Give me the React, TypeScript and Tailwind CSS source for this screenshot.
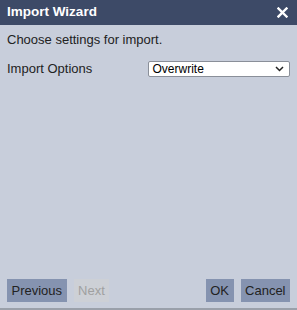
export default function App() {
  return (
    <div className="w-[297px] h-[310px] flex flex-col bg-[#c8cedb] border-b-2 border-[#9aa0aa] [font-family:'Liberation_Sans',Arial,sans-serif] text-[#222]">
      <div className="h-[25px] bg-[#3d4a67] flex items-center justify-between pl-[7px] pr-[9px] text-white">
        <span className="text-[13.5px] font-bold">Import Wizard</span>
        <svg width="11" height="11" viewBox="0 0 11 11">
          <path d="M1.5 1.5L9.5 9.5M9.5 1.5L1.5 9.5" stroke="white" strokeWidth="2.4" strokeLinecap="square" />
        </svg>
      </div>
      <div className="flex-1 flex flex-col px-[7px] pt-[7px]">
        <p className="text-[13px] leading-[16px]">Choose settings for import.</p>
        <div className="mt-[11px] flex items-center">
          <span className="w-[142px] text-[13px]">Import Options</span>
          <div className="w-[142px] h-[16px] bg-white border border-[#8a8f99] rounded-[2px] flex items-center justify-between pl-[3px] pr-[5px]">
            <span className="text-[12px] leading-none text-black">Overwrite</span>
            <svg width="9" height="6" viewBox="0 0 9 6">
              <path d="M1 1L4.5 4.5L8 1" stroke="#222" strokeWidth="1.5" fill="none" />
            </svg>
          </div>
        </div>
        <div className="mt-auto mb-[6px] flex items-center text-[13px]">
          <button className="h-[23px] px-[4.5px] bg-[#8593b0] text-[#222]">Previous</button>
          <button className="ml-[7px] h-[23px] px-[4.5px] bg-[#cdd0d6] text-[#a0a0a0]">Next</button>
          <button className="ml-auto h-[23px] px-[4.5px] bg-[#8593b0] text-[#222]">OK</button>
          <button className="ml-[7px] h-[23px] px-[4.5px] bg-[#8593b0] text-[#222]">Cancel</button>
        </div>
      </div>
    </div>
  );
}
